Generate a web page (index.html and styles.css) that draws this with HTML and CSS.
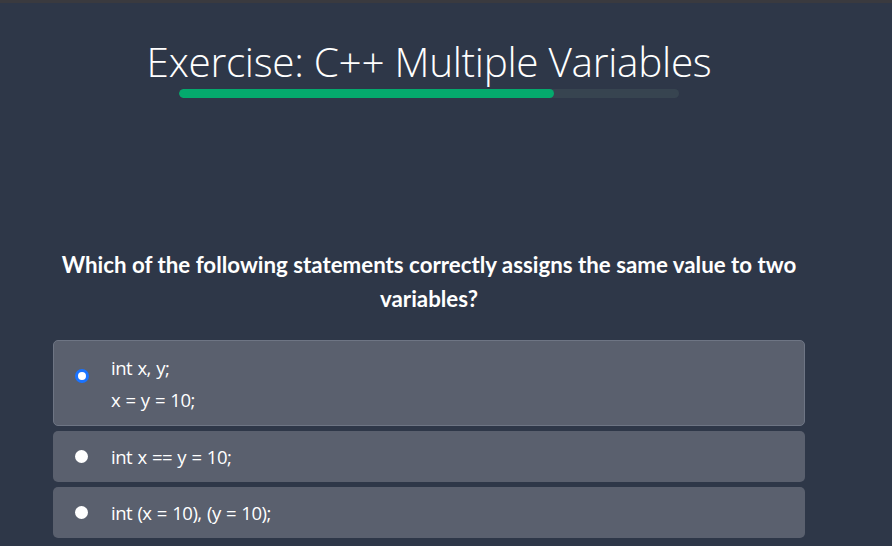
FILE: index.html
```html
<!DOCTYPE html>
<html>
<head>
<meta charset="utf-8">
<link rel="stylesheet" href="styles.css">
</head>
<body>
<div class="topline"></div>
<main class="page">
  <h1 class="title">Exercise: C++ Multiple Variables</h1>
  <div class="progress"><div class="progress-fill" style="width:75%"></div></div>
  <p class="question">Which of the following statements correctly assigns the same value to two variables?</p>
  <div class="options">
    <label class="option selected">
      <span class="radio checked"></span>
      <span class="code">int x, y;<br>x = y = 10;</span>
    </label>
    <label class="option">
      <span class="radio"></span>
      <span class="code">int x == y = 10;</span>
    </label>
    <label class="option">
      <span class="radio"></span>
      <span class="code">int (x = 10), (y = 10);</span>
    </label>
  </div>
</main>
</body>
</html>
```
FILE: styles.css
```css
html, body {
  margin: 0;
  padding: 0;
}
body {
  background: #2e3748;
  width: 892px;
  height: 546px;
  overflow: hidden;
  font-family: "Open Sans", "Noto Sans", sans-serif;
  color: #ffffff;
}
.topline {
  height: 3px;
  background: #3a3a3f;
}
.page {
  width: 858px;
  display: flex;
  flex-direction: column;
  align-items: center;
}
.title {
  margin: 33px 0 0 0;
  font-family: "Open Sans", sans-serif;
  font-weight: 300;
  font-size: 40.5px;
  line-height: 52px;
  letter-spacing: -0.3px;
  white-space: nowrap;
}
.progress {
  margin-top: 1px;
  width: 500px;
  height: 9px;
  border-radius: 5px;
  background: #374450;
  overflow: hidden;
}
.progress-fill {
  height: 100%;
  background: #04aa6d;
  border-radius: 5px;
}
.question {
  margin: 150px 0 0 0;
  width: 760px;
  text-align: center;
  font-family: "Lato", sans-serif;
  font-weight: 700;
  font-size: 22.3px;
  line-height: 34px;
}
.options {
  margin-top: 24px;
  width: 752px;
  display: flex;
  flex-direction: column;
  gap: 5px;
}
.option {
  display: flex;
  align-items: flex-start;
  background: #5a606e;
  border-radius: 5px;
  padding: 10px 20px 9px 22px;
}
.option.selected {
  border: 1px solid #6e7584;
  padding: 11px 19px 9px 21px;
}
.radio {
  width: 13px;
  height: 13px;
  border-radius: 50%;
  background: #ffffff;
  flex: none;
  margin-top: 9px;
  margin-right: 23px;
}
.radio.checked {
  box-sizing: border-box;
  width: 14px;
  height: 14px;
  margin-top: 17px;
  margin-right: 22px;
  background: #ffffff;
  border: 3px solid #1a73ff;
}
.code {
  font-family: "Open Sans", sans-serif;
  font-size: 18.5px;
  line-height: 32px;
  letter-spacing: -0.5px;
  word-spacing: 1px;
  color: #ffffff;
}
```
